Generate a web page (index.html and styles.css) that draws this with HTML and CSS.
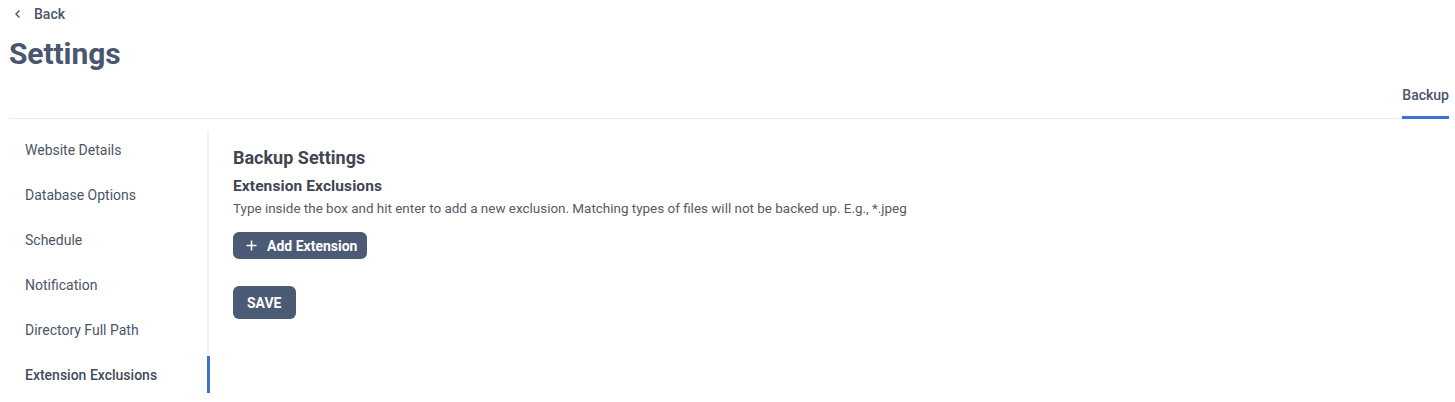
FILE: index.html
```html
<!DOCTYPE html>
<html>
<head>
<meta charset="utf-8">
<link rel="stylesheet" href="styles.css">
</head>
<body>
<div class="page">
  <a class="back" href="#">
    <svg class="chev" width="8" height="10" viewBox="0 0 8 10"><path d="M5.5 1.5 L2 5 L5.5 8.5" fill="none" stroke="#4a5568" stroke-width="1.4"/></svg>
    <span>Back</span>
  </a>
  <h1 class="title">Settings</h1>
  <div class="tabs">
    <div class="tab active">Backup</div>
  </div>
  <div class="main">
    <nav class="side">
      <div class="side-item">Website Details</div>
      <div class="side-item">Database Options</div>
      <div class="side-item">Schedule</div>
      <div class="side-item">Notification</div>
      <div class="side-item">Directory Full Path</div>
      <div class="side-item active">Extension Exclusions</div>
    </nav>
    <section class="content">
      <h2 class="h2">Backup Settings</h2>
      <h3 class="h3">Extension Exclusions</h3>
      <p class="desc">Type inside the box and hit enter to add a new exclusion. Matching types of files will not be backed up. E.g., *.jpeg</p>
      <button class="btn add"><svg width="11" height="11" viewBox="0 0 11 11"><path d="M5.5 0.5v10M0.5 5.5h10" stroke="#fff" stroke-width="1.5"/></svg><span>Add Extension</span></button>
      <button class="btn save">SAVE</button>
    </section>
  </div>
</div>
</body>
</html>
```
FILE: styles.css
```css
* { box-sizing: border-box; }
html, body { margin: 0; padding: 0; background: #fff; }
body { font-family: Roboto, "Noto Sans", sans-serif; color: #4a5568; }
.page { padding: 0 6px 0 9px; }
.back { display: flex; align-items: center; gap: 12px; height: 27px; padding-left: 5px; text-decoration: none; color: #4a5568; font-size: 14px; font-weight: 500; }
.title { margin: 8px 0 0; font-size: 30px; font-weight: 700; color: #4a5670; line-height: 38px; letter-spacing: -0.1px; }
.tabs { display: flex; justify-content: flex-end; border-bottom: 1px solid #ebecf2; margin-top: 12px; }
.tab { font-size: 14px; font-weight: 500; color: #4a5568; padding: 0 0 11px; border-bottom: 3px solid transparent; margin-bottom: -1px; line-height: 20px; }
.tab.active { border-bottom-color: #3b73d0; }
.main { display: flex; padding-top: 12px; align-items: flex-start; }
.side { width: 200px; border-right: 2px solid #f1f2f6; display: flex; flex-direction: column; }
.side-item { height: 45px; padding: 9px 0 0 16px; line-height: 21px; font-size: 14px; font-weight: 400; color: #4a5568; margin-right: -2px; border-right: 2px solid transparent; }
.side-item.active { font-weight: 500; color: #434b5a; border-right: 3px solid #3a72d2; margin-right: -2.5px; height: 37px; }
.content { padding: 17px 0 0 24px; flex: 1; display: flex; flex-direction: column; align-items: flex-start; }
.h2 { margin: 0; font-size: 18px; font-weight: 700; color: #3f4652; line-height: 20px; }
.h3 { margin: 8px 0 0; font-size: 15.5px; font-weight: 700; color: #3f4652; line-height: 20px; letter-spacing: 0.1px; }
.desc { margin: 4px 0 0; font-size: 13.45px; color: #555b66; line-height: 18px; }
.btn { border: none; background: #4b5a75; color: #fff; font-family: inherit; font-weight: 700; border-radius: 6px; cursor: pointer; }
.add { margin-top: 14px; height: 27px; display: flex; align-items: center; gap: 10px; padding: 0 10px 0 13px; font-size: 14px; }
.save { margin-top: 27px; height: 33px; padding: 0 14px; font-size: 14px; }
```
